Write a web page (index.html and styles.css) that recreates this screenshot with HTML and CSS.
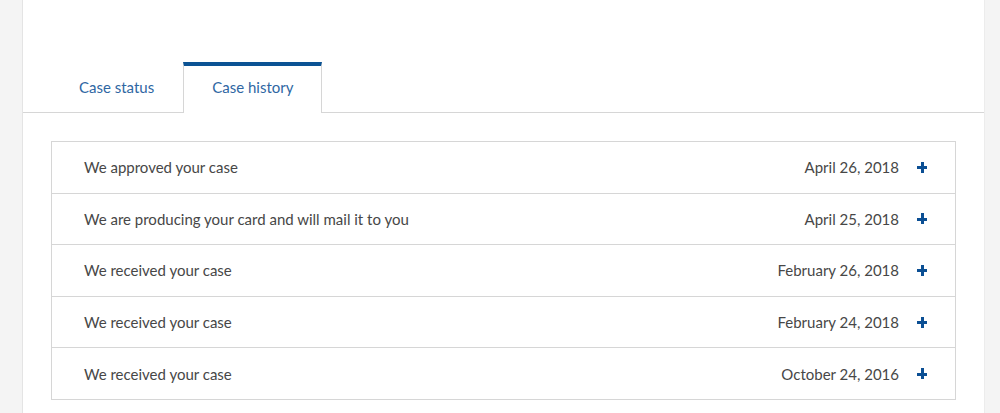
FILE: index.html
```html
<!DOCTYPE html>
<html lang="en">
<head>
<meta charset="utf-8">
<title>Case history</title>
<link rel="stylesheet" href="styles.css">
</head>
<body>
<main class="card">
  <nav class="tabs">
    <a class="tab">Case status</a>
    <a class="tab tab-active">Case history</a>
  </nav>
  <ul class="history">
    <li class="row"><span class="event">We approved your case</span><span class="date">April 26, 2018</span><span class="plus"></span></li>
    <li class="row"><span class="event">We are producing your card and will mail it to you</span><span class="date">April 25, 2018</span><span class="plus"></span></li>
    <li class="row"><span class="event">We received your case</span><span class="date">February 26, 2018</span><span class="plus"></span></li>
    <li class="row"><span class="event">We received your case</span><span class="date">February 24, 2018</span><span class="plus"></span></li>
    <li class="row"><span class="event">We received your case</span><span class="date">October 24, 2016</span><span class="plus"></span></li>
  </ul>
</main>
</body>
</html>
```
FILE: styles.css
```css
* { box-sizing: border-box; }
body {
  margin: 0;
  background: #f4f4f4;
  font-family: Lato, "Open Sans", sans-serif;
  height: 413px;
  overflow: hidden;
}
.card {
  margin-left: 22px;
  width: 963px;
  min-height: 420px;
  background: #fff;
  border-left: 1px solid #e4e4e4;
  border-right: 1px solid #ececec;
  padding-top: 62px;
}
.tabs {
  display: flex;
  padding-left: 27px;
  border-bottom: 1px solid #d6d6d6;
}
.tab {
  display: block;
  height: 51px;
  margin-bottom: -1px;
  padding: 0 28px;
  line-height: 43px;
  border: 1px solid transparent;
  border-top: 4px solid transparent;
  border-bottom: none;
  color: #2f67a3;
  font-size: 15px;
}
.tab-active {
  background: #fff;
  border-color: #d6d6d6;
  border-top-color: #0b5394;
}
.history {
  list-style: none;
  margin: 28px 28px 0 28px;
  padding: 0;
  border: 1px solid #d6d6d6;
}
.row {
  display: flex;
  align-items: center;
  height: 51.6px;
  padding: 0 28px 0 32px;
  border-top: 1px solid #d6d6d6;
  color: #474747;
  font-size: 15px;
}
.row:first-child { border-top: none; height: 50.6px; }
.event { flex: 1; }
.date { margin-right: 18px; }
.plus {
  position: relative;
  width: 10px;
  height: 10px;
}
.plus::before, .plus::after {
  content: "";
  position: absolute;
  background: #0b4f94;
}
.plus::before { left: 0; top: 4px; width: 10px; height: 3px; }
.plus::after { left: 4px; top: -0.5px; width: 3px; height: 11px; }
```
